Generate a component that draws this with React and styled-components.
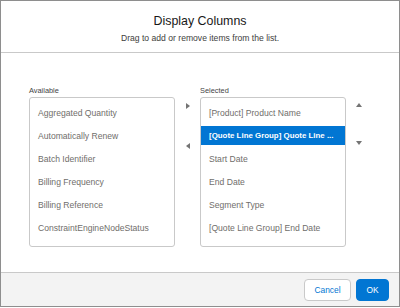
import React from "react";
import styled, { createGlobalStyle } from "styled-components";

const available = [
  "Aggregated Quantity",
  "Automatically Renew",
  "Batch Identifier",
  "Billing Frequency",
  "Billing Reference",
  "ConstraintEngineNodeStatus",
];

const selected = [
  "[Product] Product Name",
  "[Quote Line Group] Quote Line ...",
  "Start Date",
  "End Date",
  "Segment Type",
  "[Quote Line Group] End Date",
];

const App = () => {
  return (
    <>
      <GlobalStyle />
      <Modal>
        <Header>
          <Title>Display Columns</Title>
          <Subtitle>Drag to add or remove items from the list.</Subtitle>
        </Header>
        <Body>
          <ListColumn>
            <ListLabel>Available</ListLabel>
            <ListBox>
              {available.map((item) => (
                <ListItem key={item}>{item}</ListItem>
              ))}
            </ListBox>
          </ListColumn>
          <ArrowColumn>
            <Arrow dir="right" />
            <Arrow dir="left" />
          </ArrowColumn>
          <ListColumn>
            <ListLabel>Selected</ListLabel>
            <ListBox>
              {selected.map((item, index) => (
                <ListItem key={item} active={index === 1}>
                  {item}
                </ListItem>
              ))}
            </ListBox>
          </ListColumn>
          <ArrowColumn>
            <Arrow dir="up" />
            <Arrow dir="down" />
          </ArrowColumn>
        </Body>
        <Footer>
          <Button>Cancel</Button>
          <Button primary>OK</Button>
        </Footer>
      </Modal>
    </>
  );
};

const GlobalStyle = createGlobalStyle`
  * {
    box-sizing: border-box;
  }

  body {
    margin: 0;
    background: #ffffff;
    font-family: "Liberation Sans", Arial, sans-serif;
  }
`;

const Modal = styled.div`
  display: flex;
  flex-direction: column;
  width: 400px;
  height: 307px;
  border: 1px solid #8e8e8e;
  background: #ffffff;
`;

const Header = styled.div`
  height: 52px;
  display: flex;
  flex-direction: column;
  align-items: center;
  padding-top: 12px;
  border-bottom: 1px solid #c9c9c9;
`;

const Title = styled.h2`
  margin: 0;
  font-size: 12.4px;
  font-weight: normal;
  line-height: 16px;
  color: #181818;
`;

const Subtitle = styled.p`
  margin: 4px 0 0;
  font-size: 8.6px;
  line-height: 11px;
  color: #3e3e3c;
`;

const Body = styled.div`
  flex: 1;
  display: flex;
  align-items: flex-start;
  padding: 33px 0 0 28px;
`;

const ListColumn = styled.div`
  display: flex;
  flex-direction: column;
  width: 146px;
`;

const ListLabel = styled.span`
  font-size: 7.4px;
  line-height: 10px;
  color: #444444;
  margin-bottom: 1px;
`;

const ListBox = styled.ul`
  list-style: none;
  margin: 0;
  padding: 5px 0 0;
  height: 150px;
  border: 1px solid #c9c9c9;
  border-radius: 3px;
  overflow: hidden;
`;

const ListItem = styled.li`
  height: 19px;
  margin-bottom: 4px;
  padding: 0 8px;
  display: flex;
  align-items: center;
  white-space: nowrap;
  overflow: hidden;
  font-size: ${(p) => (p.active ? "7.9px" : "8.6px")};
  color: ${(p) => (p.active ? "#ffffff" : "#706e6b")};
  background: ${(p) => (p.active ? "#0176d3" : "transparent")};
  font-weight: ${(p) => (p.active ? "bold" : "normal")};
`;

const ArrowColumn = styled.div`
  width: 25px;
  display: flex;
  flex-direction: column;
  align-items: center;
  gap: 34px;
  padding-top: 17px;
`;

const arrowShapes = {
  right: "border-width: 3px 0 3px 4px; border-color: transparent transparent transparent #747474;",
  left: "border-width: 3px 4px 3px 0; border-color: transparent #747474 transparent transparent;",
  up: "border-width: 0 3px 4px 3px; border-color: transparent transparent #747474 transparent;",
  down: "border-width: 4px 3px 0 3px; border-color: #747474 transparent transparent transparent;",
};

const Arrow = styled.span`
  width: 0;
  height: 0;
  border-style: solid;
  ${(p) => arrowShapes[p.dir]}
`;

const Footer = styled.div`
  height: 34px;
  display: flex;
  justify-content: flex-end;
  align-items: center;
  gap: 5px;
  padding: 0 10px 0 0;
  background: #f3f3f3;
  border-top: 1px solid #c9c9c9;
`;

const Button = styled.button`
  height: 22px;
  width: ${(p) => (p.primary ? "33px" : "47px")};
  padding: 0;
  border-radius: 4px;
  border: 1px solid ${(p) => (p.primary ? "#0176d3" : "#c9c9c9")};
  background: ${(p) => (p.primary ? "#0176d3" : "#ffffff")};
  color: ${(p) => (p.primary ? "#ffffff" : "#0176d3")};
  font-family: "Liberation Sans", Arial, sans-serif;
  font-size: 8.4px;
  cursor: pointer;
`;

export default App;
